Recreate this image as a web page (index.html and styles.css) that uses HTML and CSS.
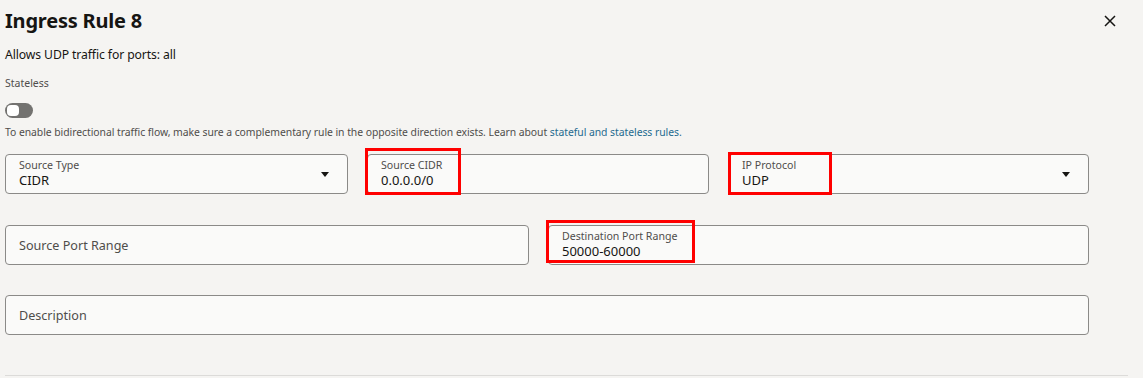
FILE: index.html
```html
<!DOCTYPE html>
<html lang="en">
<head>
    <meta charset="UTF-8">
    <title>Ingress Rule 8</title>
    <link rel="stylesheet" href="styles.css">
</head>
<body>
    <div class="panel">
        <div class="panel-header">
            <h2>Ingress Rule 8</h2>
            <button class="close-btn" aria-label="Close">
                <svg width="12" height="12" viewBox="0 0 12 12"><path d="M1 1 L11 11 M11 1 L1 11" stroke="#161513" stroke-width="1.5" fill="none"/></svg>
            </button>
        </div>

        <p class="summary">Allows UDP traffic for ports: all</p>

        <div class="toggle-group">
            <span class="toggle-label">Stateless</span>
            <span class="toggle"><span class="knob"></span></span>
            <p class="help">To enable bidirectional traffic flow, make sure a complementary rule in the opposite direction exists. Learn about <a href="#">stateful and stateless rules.</a></p>
        </div>

        <div class="row row-three">
            <div class="field">
                <span class="field-label">Source Type</span>
                <span class="field-value">CIDR</span>
                <span class="caret"></span>
            </div>
            <div class="field">
                <span class="field-label">Source CIDR</span>
                <span class="field-value">0.0.0.0/0</span>
                <span class="mark mark-cidr"></span>
            </div>
            <div class="field">
                <span class="field-label">IP Protocol</span>
                <span class="field-value">UDP</span>
                <span class="caret"></span>
                <span class="mark mark-proto"></span>
            </div>
        </div>

        <div class="row row-two">
            <div class="field empty">
                <span class="placeholder">Source Port Range</span>
            </div>
            <div class="field">
                <span class="field-label">Destination Port Range</span>
                <span class="field-value">50000-60000</span>
                <span class="mark mark-dest"></span>
            </div>
        </div>

        <div class="row">
            <div class="field empty">
                <span class="placeholder">Description</span>
            </div>
        </div>

        <div class="divider"></div>
    </div>
</body>
</html>
```

FILE: styles.css
```css
* {
    box-sizing: border-box;
    font-family: 'Noto Sans', 'Open Sans', sans-serif;
}

body {
    margin: 0;
    background-color: #f5f4f2;
    color: #161513;
}

.panel {
    padding: 0 5px;
}

.panel-header {
    display: flex;
    justify-content: space-between;
    align-items: center;
    padding-top: 5px;
    height: 37px;
}

h2 {
    margin: 0;
    font-size: 20px;
    font-weight: 700;
    line-height: 28px;
    letter-spacing: -0.2px;
}

.close-btn {
    border: none;
    background: none;
    padding: 0;
    margin-right: 22px;
    width: 12px;
    height: 12px;
    display: flex;
    cursor: pointer;
}

.summary {
    margin: 9px 0 0;
    font-size: 12.2px;
    line-height: 18px;
    letter-spacing: -0.1px;
}

.toggle-group {
    margin-top: 11px;
}

.toggle-label {
    display: block;
    font-size: 10.5px;
    line-height: 16px;
    color: #4f4d4b;
}

.toggle {
    display: block;
    width: 28px;
    height: 15px;
    margin-top: 12px;
    border-radius: 8px;
    background-color: #737270;
    padding: 2px;
}

.knob {
    display: block;
    width: 12px;
    height: 11px;
    border-radius: 4px;
    background-color: #fff;
}

.help {
    margin: 6px 0 0;
    font-size: 10.4px;
    line-height: 16px;
    color: #4f4d4b;
    letter-spacing: -0.05px;
}

.help a {
    color: #1f6b8f;
    text-decoration: none;
}

.row {
    display: grid;
    width: 1084px;
    gap: 19px;
    margin-top: 31px;
}

.row-three {
    grid-template-columns: 343px 342px 361px;
    margin-top: 14px;
}

.row-two {
    grid-template-columns: 524px 541px;
}

.row-two + .row {
    margin-top: 30px;
}

.field {
    position: relative;
    height: 40px;
    border: 1px solid #8b8a88;
    border-radius: 4px;
    background-color: #fafaf9;
    padding: 4px 13px 0;
    display: flex;
    flex-direction: column;
}

.field.empty {
    justify-content: center;
    padding-top: 0;
}

.field-label {
    font-size: 10.6px;
    line-height: 13px;
    color: #4f4d4b;
}

.field-value {
    font-size: 13px;
    line-height: 17px;
}

.placeholder {
    font-size: 12.6px;
    color: #4f4d4b;
}

.caret {
    position: absolute;
    right: 18px;
    top: 17px;
    width: 0;
    height: 0;
    border-left: 4px solid transparent;
    border-right: 4px solid transparent;
    border-top: 5px solid #161513;
}

.mark {
    position: absolute;
    border: 3px solid #ff0000;
}

.mark-cidr {
    left: -3px;
    top: -7px;
    width: 96px;
    height: 47px;
}

.mark-proto {
    left: -1px;
    top: -3px;
    width: 104px;
    height: 43px;
}

.mark-dest {
    left: -3px;
    top: -6px;
    width: 149px;
    height: 43px;
}

.divider {
    width: 1123px;
    margin-top: 40px;
    border-top: 1px solid #dcdbd9;
}
```
